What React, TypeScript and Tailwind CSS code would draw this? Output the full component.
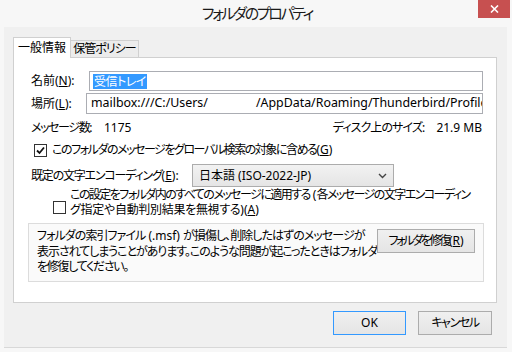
import React from "react";

const FONT = "font-['Noto_Sans','Noto_Sans_CJK_JP',sans-serif]";

function Check({ checked }: { checked: boolean }) {
  return (
    <div className="w-[13px] h-[13px] border border-[#333333] bg-white flex items-center justify-center shrink-0">
      {checked && (
        <svg width="9" height="9" viewBox="0 0 9 9">
          <path d="M1 4.5 L3.5 7 L8 1.5" fill="none" stroke="#111" strokeWidth="1.8" />
        </svg>
      )}
    </div>
  );
}

export default function App() {
  return (
    <div className={`w-[512px] h-[352px] bg-[#f7f7f7] flex flex-col text-[12px] text-black ${FONT} [font-feature-settings:'palt'] overflow-hidden`}>
      {/* Title bar */}
      <div className="relative h-[27px] shrink-0 flex items-center justify-center">
        <span className="text-[15px] text-[#1a1a1a] tracking-[-2.3px] pl-[2px] pb-[1px]">フォルダのプロパティ</span>
        <button className="absolute right-[2px] top-0 w-[32px] h-[18px] bg-[#c75050] flex items-center justify-center">
          <svg width="9" height="8" viewBox="0 0 9 8">
            <path d="M1 0.5 L8 7.5 M8 0.5 L1 7.5" stroke="#fff" strokeWidth="1.6" />
          </svg>
        </button>
      </div>

      {/* Client area */}
      <div className="ml-[4px] w-[503px] h-[321px] bg-[#f0f0f0] border-b border-[#d8d8d8] flex flex-col pl-[9px] pr-[10px] pt-[10px]">
        {/* Tabs */}
        <div className="relative z-10 h-[21px] mb-[-1px] flex items-end">
          <div className="h-[21px] w-[58px] bg-white border border-b-0 border-[#d0d0d0] flex items-center justify-center pb-[1px]">
            一般情報
          </div>
          <div className="h-[18px] w-[68px] bg-[#ececec] border border-l-0 border-[#d0d0d0] flex items-center justify-center whitespace-nowrap tracking-[-1px]">
            保管ポリシー
          </div>
        </div>

        {/* Panel */}
        <div className="h-[246px] bg-white border border-[#d0d0d0] flex flex-col pl-[14px] pr-[12px] pt-[13px]">
          {/* Name */}
          <div className="ml-[3px] mr-[1px] flex items-center h-[20px]">
            <div className="w-[58px] shrink-0">
              名前(<span className="underline">N</span>):
            </div>
            <div className="flex-1 h-[20px] border border-[#abadb3] bg-white flex items-center pl-[3px]">
              <span className="bg-[#3399ff] text-white px-[1px] leading-[15px] tracking-[-0.5px]">受信トレイ</span>
            </div>
          </div>

          {/* Location */}
          <div className="ml-[3px] mr-[1px] mt-[2px] flex items-center h-[21px]">
            <div className="w-[55px] shrink-0">
              場所(<span className="underline">L</span>):
            </div>
            <div className="flex-1 h-[21px] border border-[#abadb3] bg-white flex items-center pl-[4px] overflow-hidden whitespace-nowrap text-[12.4px]">
              <span>mailbox:///C:/Users/</span>
              <span className="inline-block w-[48px] shrink-0" />
              <span>/AppData/Roaming/Thunderbird/Profiles/</span>
            </div>
          </div>

          {/* Stats */}
          <div className="ml-[3px] mr-[2px] mt-[6px] h-[16px] flex items-center justify-between">
            <div className="flex items-center">
              <span className="w-[73px] tracking-[-1.4px]">メッセージ数:</span>
              <span>1175</span>
            </div>
            <div className="flex items-center gap-[12px]">
              <span className="tracking-[-0.9px]">ディスク上のサイズ:</span>
              <span>21.9 MB</span>
            </div>
          </div>

          {/* Global search */}
          <div className="ml-[6px] mt-[6px] h-[16px] flex items-center gap-[5px]">
            <Check checked />
            <span className="whitespace-nowrap">
              <span className="tracking-[-1.45px]">このフォルダのメッセージをグローバル検索の対象に含める</span>
              (<span className="underline">G</span>)
            </span>
          </div>

          {/* Encoding */}
          <div className="ml-[3px] mt-[6px] h-[23px] flex items-center">
            <div className="w-[161px] shrink-0 whitespace-nowrap">
              <span className="tracking-[-1.2px]">既定の文字エンコーディング</span>
              (<span className="underline">E</span>):
            </div>
            <div className="w-[202px] h-[23px] border border-[#acacac] bg-gradient-to-b from-[#f2f2f2] to-[#e5e5e5] flex items-center justify-between pl-[6px] pr-[6px]">
              <span>日本語 (ISO-2022-JP)</span>
              <svg width="9" height="6" viewBox="0 0 9 6">
                <path d="M1 1 L4.5 4.5 L8 1" fill="none" stroke="#444" strokeWidth="1.4" />
              </svg>
            </div>
          </div>

          {/* Apply to all */}
          <div className="ml-[25px] flex items-center gap-[4px]">
            <div className="pt-[10px]">
              <Check checked={false} />
            </div>
            <div className="leading-[15px] whitespace-nowrap">
              <span className="tracking-[-1.55px]">この設定をフォルダ内のすべてのメッセージに適用する</span>{" "}
              (<span className="tracking-[-1.55px]">各メッセージの文字エンコーディン</span>
              <br />
              <span className="tracking-[-0.3px]">グ指定や自動判別結果を無視する</span>)(<span className="underline">A</span>)
            </div>
          </div>

          {/* Repair box */}
          <div className="mt-[6px] h-[59px] border border-[#dcdcdc] bg-[#fafafa] flex justify-between pl-[8px] pr-[8px] pt-[4px]">
            <div className="leading-[15.5px] whitespace-nowrap">
              <span className="tracking-[-0.95px]">フォルダの索引ファイル</span> (.msf){" "}
              <span className="tracking-[-0.95px]">が損傷し、削除したはずのメッセージが</span>
              <br />
              <span className="tracking-[-1.05px]">表示されてしまうことがあります。このような問題が起こったときはフォルダ</span>
              <br />
              <span className="tracking-[-1.3px]">を修復してください。</span>
            </div>
            <button className="mt-[1px] w-[99px] h-[24px] border border-[#acacac] bg-gradient-to-b from-[#f0f0f0] to-[#e5e5e5] flex items-center justify-center whitespace-nowrap">
              <span className="tracking-[-2.3px]">フォルダを修復</span>(<span className="underline">R</span>)
            </button>
          </div>
        </div>

        {/* Dialog buttons */}
        <div className="mt-[8px] pr-[5px] flex justify-end gap-[12px]">
          <button className="w-[73px] h-[24px] border border-[#3399ff] bg-gradient-to-b from-[#f0f0f0] to-[#e5e5e5] flex items-center justify-center">
            OK
          </button>
          <button className="w-[74px] h-[24px] border border-[#acacac] bg-gradient-to-b from-[#f0f0f0] to-[#e5e5e5] flex items-center justify-center tracking-[-1.4px]">
            キャンセル
          </button>
        </div>
      </div>
    </div>
  );
}
